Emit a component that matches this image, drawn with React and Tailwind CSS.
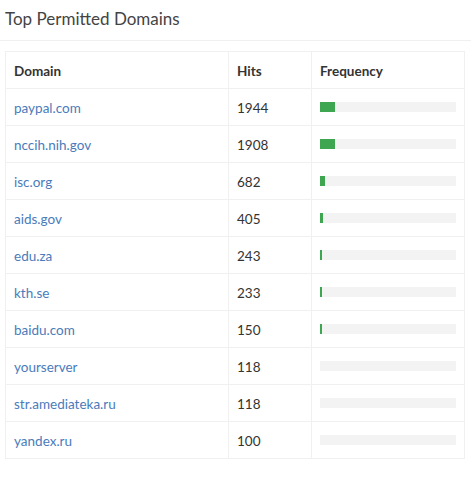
import React from 'react';

const rows = [
  { domain: 'paypal.com', hits: 1944, bar: 15 },
  { domain: 'nccih.nih.gov', hits: 1908, bar: 15 },
  { domain: 'isc.org', hits: 682, bar: 5 },
  { domain: 'aids.gov', hits: 405, bar: 3 },
  { domain: 'edu.za', hits: 243, bar: 2 },
  { domain: 'kth.se', hits: 233, bar: 2 },
  { domain: 'baidu.com', hits: 150, bar: 2 },
  { domain: 'yourserver', hits: 118, bar: 0 },
  { domain: 'str.amediateka.ru', hits: 118, bar: 0 },
  { domain: 'yandex.ru', hits: 100, bar: 0 },
];

const App = () => {
  return (
    <div className="min-h-screen bg-white text-[#333] font-['Lato',sans-serif]">
      <h3 className="h-[41px] pl-[5px] pt-[8px] text-[17px] leading-[22px] text-[#444] border-b border-[#f0f0f0]">
        Top Permitted Domains
      </h3>

      <div className="px-[5px] pt-[10px]">
        <table className="w-[460px] border-collapse text-[13.5px] table-fixed">
          <thead>
            <tr className="h-[37px]">
              <th className="w-[223px] border border-[#f0f0f0] pl-[8px] pt-[2px] text-left font-bold">Domain</th>
              <th className="w-[83px] border border-[#f0f0f0] pl-[8px] pt-[2px] text-left font-bold">Hits</th>
              <th className="border border-[#f0f0f0] pl-[8px] pt-[2px] text-left font-bold">Frequency</th>
            </tr>
          </thead>
          <tbody>
            {rows.map((r) => (
              <tr key={r.domain} className="h-[37px]">
                <td className="border border-[#f0f0f0] pl-[8px] pt-[2px] text-[#4a7bbb]">{r.domain}</td>
                <td className="border border-[#f0f0f0] pl-[8px] pt-[2px]">{r.hits}</td>
                <td className="border border-[#f0f0f0] pl-[8px] pr-[8px]">
                  <div className="h-[10px] w-[136px] bg-[#f3f3f3]">
                    <div className="h-full bg-[#3ea650]" style={{ width: r.bar }} />
                  </div>
                </td>
              </tr>
            ))}
          </tbody>
        </table>
      </div>
    </div>
  );
};

export default App;
